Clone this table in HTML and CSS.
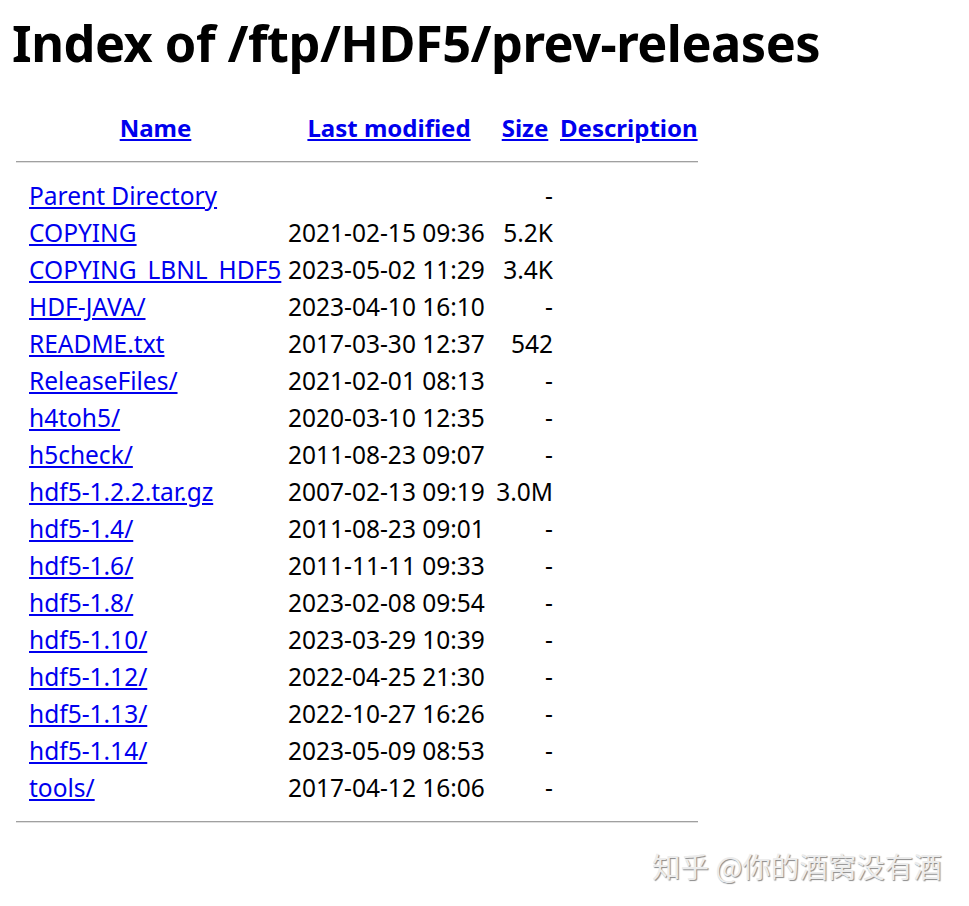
FILE: index.html
```html
<!DOCTYPE html>
<html>
<head>
<meta charset="utf-8">
<title>Index of /ftp/HDF5/prev-releases</title>
<link rel="stylesheet" href="styles.css">
</head>
<body>
<h1 class="title">Index of /ftp/HDF5/prev-releases</h1>
<table class="listing">
<colgroup><col class="c-icon"><col class="c-name"><col class="c-date"><col class="c-size"><col class="c-desc"></colgroup>
<tr class="head"><th></th><th><a href="#">Name</a></th><th><a href="#">Last modified</a></th><th><a href="#">Size</a></th><th><a href="#">Description</a></th></tr>
<tr class="rule rule-top"><th colspan="5"><hr class="sep"></th></tr>
<tr><td></td><td><a href="#">Parent Directory</a></td><td>&nbsp;</td><td class="size">-</td><td>&nbsp;</td></tr>
<tr><td></td><td><a href="#">COPYING</a></td><td>2021-02-15 09:36</td><td class="size">5.2K</td><td>&nbsp;</td></tr>
<tr><td></td><td><a href="#">COPYING_LBNL_HDF5</a></td><td>2023-05-02 11:29</td><td class="size">3.4K</td><td>&nbsp;</td></tr>
<tr><td></td><td><a href="#">HDF-JAVA/</a></td><td>2023-04-10 16:10</td><td class="size">-</td><td>&nbsp;</td></tr>
<tr><td></td><td><a href="#">README.txt</a></td><td>2017-03-30 12:37</td><td class="size">542</td><td>&nbsp;</td></tr>
<tr><td></td><td><a href="#">ReleaseFiles/</a></td><td>2021-02-01 08:13</td><td class="size">-</td><td>&nbsp;</td></tr>
<tr><td></td><td><a href="#">h4toh5/</a></td><td>2020-03-10 12:35</td><td class="size">-</td><td>&nbsp;</td></tr>
<tr><td></td><td><a href="#">h5check/</a></td><td>2011-08-23 09:07</td><td class="size">-</td><td>&nbsp;</td></tr>
<tr><td></td><td><a href="#">hdf5-1.2.2.tar.gz</a></td><td>2007-02-13 09:19</td><td class="size">3.0M</td><td>&nbsp;</td></tr>
<tr><td></td><td><a href="#">hdf5-1.4/</a></td><td>2011-08-23 09:01</td><td class="size">-</td><td>&nbsp;</td></tr>
<tr><td></td><td><a href="#">hdf5-1.6/</a></td><td>2011-11-11 09:33</td><td class="size">-</td><td>&nbsp;</td></tr>
<tr><td></td><td><a href="#">hdf5-1.8/</a></td><td>2023-02-08 09:54</td><td class="size">-</td><td>&nbsp;</td></tr>
<tr><td></td><td><a href="#">hdf5-1.10/</a></td><td>2023-03-29 10:39</td><td class="size">-</td><td>&nbsp;</td></tr>
<tr><td></td><td><a href="#">hdf5-1.12/</a></td><td>2022-04-25 21:30</td><td class="size">-</td><td>&nbsp;</td></tr>
<tr><td></td><td><a href="#">hdf5-1.13/</a></td><td>2022-10-27 16:26</td><td class="size">-</td><td>&nbsp;</td></tr>
<tr><td></td><td><a href="#">hdf5-1.14/</a></td><td>2023-05-09 08:53</td><td class="size">-</td><td>&nbsp;</td></tr>
<tr><td></td><td><a href="#">tools/</a></td><td>2017-04-12 16:06</td><td class="size">-</td><td>&nbsp;</td></tr>
<tr class="rule rule-bottom"><th colspan="5"><hr class="sep"></th></tr>
</table>
<div class="watermark">知乎 @你的酒窝没有酒</div>
</body>
</html>
```

FILE: styles.css
```css
html, body {
  margin: 0;
  padding: 0;
  background: #ffffff;
}
body {
  padding: 0 12px;
  font-family: "Noto Sans", "Open Sans", sans-serif;
  color: #000;
  position: relative;
  min-height: 906px;
  box-sizing: border-box;
}
.title {
  margin: 0;
  padding-top: 12px;
  font-size: 50.5px;
  line-height: 62px;
  font-weight: 700;
  letter-spacing: -0.5px;
}
.listing {
  margin-top: 33px;
  margin-left: 4px;
  border-collapse: collapse;
  table-layout: fixed;
  width: 682px;
  font-size: 24.5px;
}
.c-icon { width: 10px; }
.c-name { width: 259px; }
.c-date { width: 208px; }
.c-size { width: 64px; }
.c-desc { width: 141px; }
.listing td, .listing th {
  padding: 0 3px;
  height: 37px;
  white-space: nowrap;
  vertical-align: middle;
}
.listing th {
  font-weight: 700;
  text-align: center;
  font-size: 24px;
}
.listing td:first-child, .listing th:first-child { padding: 0; }
.listing .size { text-align: right; padding-right: 4px; }
.listing a { color: #0000ee; text-decoration: underline; }
.head th { height: 40px; }
.rule th { padding: 0; }
.rule-top th { height: 30px; }
.rule-bottom th { height: 32px; }
.sep {
  margin: 0;
  border: 0;
  height: 0;
  border-top: 1px solid #a0a0a0;
  border-bottom: 1px solid #e0e0e0;
}
.watermark {
  position: absolute;
  left: 652px;
  top: 848px;
  font-family: "Noto Sans CJK SC", sans-serif;
  font-size: 28.5px;
  line-height: 36px;
  color: #ececec;
  text-shadow: 1px 1px 1px #8a8a8a;
  white-space: nowrap;
}
```
